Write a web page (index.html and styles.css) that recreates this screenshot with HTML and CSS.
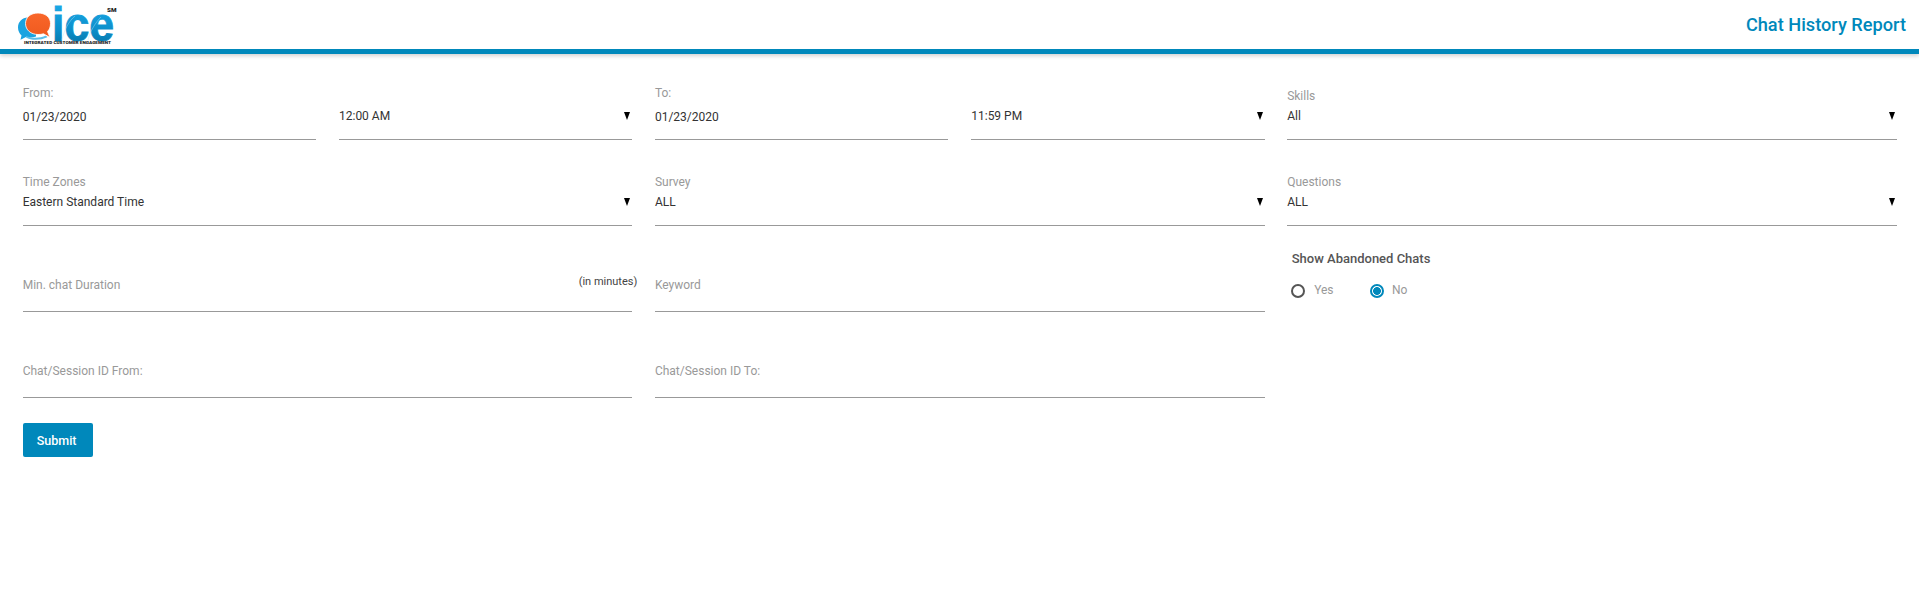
FILE: index.html
```html
<!DOCTYPE html>
<html lang="en">
<head>
<meta charset="utf-8">
<title>Chat History Report</title>
<link rel="stylesheet" href="styles.css">
</head>
<body>
<header class="topbar">
  <svg class="logo" viewBox="16 2 102 46" width="102" height="46" role="img" aria-label="ICE">
    <defs>
      <linearGradient id="iceFill" x1="0" y1="0" x2="0" y2="1">
        <stop offset="0" stop-color="#1fb0ee"/>
        <stop offset="0.6" stop-color="#0c8fcb"/>
        <stop offset="1" stop-color="#056f9f"/>
      </linearGradient>
      <linearGradient id="bubbleFill" x1="0" y1="0" x2="0" y2="1">
        <stop offset="0" stop-color="#f9662a"/>
        <stop offset="1" stop-color="#ef5a1f"/>
      </linearGradient>
    </defs>
    <path class="bubble-blue" d="M28 17.5C22 17.5 18 22 18 27.5C18 31 19.5 33.5 21.5 35.5L20.5 39.8L26 37C29 37.6 33 37.6 36 36.5L36 17.5Z"/>
    <path class="bubble-arc" d="M26 36C32 38.6 40 38.4 46 35.6L47.4 37.2C40 40.6 31 40.4 26 37.4Z"/>
    <path class="bubble-orange" d="M38 13C45 13 50.5 17 50.5 23.5C50.5 27 49.5 29.5 47.5 31.5L50 37.5L43.5 33.8C41.8 34.3 40 34.5 38 34.5C31 34.5 25.5 30 25.5 23.5C25.5 17 31 13 38 13Z"/>
    <text class="logo-word" x="52" y="40.6" textLength="62" lengthAdjust="spacingAndGlyphs">ice</text>
    <path class="logo-swoosh" d="M62 40C64 30 69 21 75 16M88 40C90 31 96 22 101 17"/>
    <text class="logo-sm" x="107" y="12.3" textLength="9.5" lengthAdjust="spacingAndGlyphs">SM</text>
    <text class="logo-tag" x="24" y="44.4" textLength="87" lengthAdjust="spacingAndGlyphs">INTEGRATED CUSTOMER ENGAGEMENT</text>
  </svg>
  <h1 class="title">Chat History Report</h1>
</header>

<main class="report">
  <form class="form-grid">
    <div class="pair">
      <div class="field date">
        <div class="label">From:</div>
        <div class="value">01/23/2020</div>
      </div>
      <div class="field select bare">
        <div class="value">12:00 AM</div>
        <span class="caret"></span>
      </div>
    </div>
    <div class="pair">
      <div class="field date">
        <div class="label">To:</div>
        <div class="value">01/23/2020</div>
      </div>
      <div class="field select bare">
        <div class="value">11:59 PM</div>
        <span class="caret"></span>
      </div>
    </div>
    <div class="field select">
      <div class="label">Skills</div>
      <div class="value">All</div>
      <span class="caret"></span>
    </div>

    <div class="field select">
      <div class="label">Time Zones</div>
      <div class="value">Eastern Standard Time</div>
      <span class="caret"></span>
    </div>
    <div class="field select">
      <div class="label">Survey</div>
      <div class="value">ALL</div>
      <span class="caret"></span>
    </div>
    <div class="field select">
      <div class="label">Questions</div>
      <div class="value">ALL</div>
      <span class="caret"></span>
    </div>

    <div class="field text">
      <div class="label">Min. chat Duration</div>
      <span class="hint">(in minutes)</span>
    </div>
    <div class="field text">
      <div class="label">Keyword</div>
    </div>
    <div class="choice">
      <div class="choice-title">Show Abandoned Chats</div>
      <div class="radios">
        <label class="radio"><span class="dot"></span><span class="radio-text">Yes</span></label>
        <label class="radio on"><span class="dot"></span><span class="radio-text">No</span></label>
      </div>
    </div>

    <div class="field text">
      <div class="label">Chat/Session ID From:</div>
    </div>
    <div class="field text">
      <div class="label">Chat/Session ID To:</div>
    </div>
  </form>
  <button class="submit" type="button">Submit</button>
</main>
</body>
</html>
```
FILE: styles.css
```css
* { box-sizing: border-box; }
html, body { margin: 0; padding: 0; background: #fff; }
body { font-family: Roboto, "Liberation Sans", sans-serif; font-size: 12px; color: #333; height: 595px; overflow: hidden; }

.topbar {
  height: 54px;
  border-bottom: 5px solid #0088bb;
  box-shadow: 0 2px 4px rgba(0, 0, 0, .18);
  display: flex;
  align-items: flex-start;
  justify-content: space-between;
  padding: 2px 13px 0 16px;
}
.logo { display: block; flex: none; overflow: visible; }
.bubble-blue { fill: #1ba3e0; }
.bubble-orange { fill: url(#bubbleFill); stroke: #fff; stroke-width: .8; }
.bubble-arc { fill: #5bbde8; }
.logo-word { font-family: "Liberation Sans", sans-serif; font-weight: 700; font-size: 48px; fill: url(#iceFill); stroke: url(#iceFill); stroke-width: .9; }
.logo-swoosh { fill: none; stroke: #bfe6f7; stroke-width: .5; opacity: .8; }
.logo-sm { font-family: Roboto, sans-serif; font-weight: 900; font-size: 5.5px; fill: #222; }
.logo-tag { font-family: Roboto, sans-serif; font-weight: 900; font-size: 4px; fill: #222; }

.title { margin: 13px 0 0 -2px; font-size: 18.2px; line-height: 20px; font-weight: 500; color: #0088bb; }

.report { padding: 0 22px 0 22.67px; }
.form-grid {
  display: grid;
  grid-template-columns: repeat(3, 609.67px);
  grid-auto-rows: 86px;
  column-gap: 22.6px;
}
.pair { display: grid; grid-template-columns: 293.33px 293.33px; column-gap: 23px; }

.field {
  position: relative;
  display: flex;
  flex-direction: column;
  justify-content: flex-end;
  border-bottom: 1px solid #999;
}
.label { font-size: 12px; line-height: 16px; color: #999; }
.value { font-size: 12px; line-height: 24px; padding-bottom: 11px; color: #333; }
.date .value { line-height: 26px; padding-bottom: 9px; }
.date .label { margin-bottom: 3px; }
.text .label { padding-bottom: 18px; }

.caret {
  position: absolute;
  right: 2px;
  top: 58px;
  width: 0;
  height: 0;
  border-left: 3.5px solid transparent;
  border-right: 3.5px solid transparent;
  border-top: 8px solid #000;
}
.hint {
  position: absolute;
  right: -5px;
  top: 48px;
  font-size: 11px;
  line-height: 16px;
  color: #444;
}

.choice { padding: 24px 0 0 4.5px; }
.choice-title { font-size: 13px; font-weight: 500; line-height: 18px; color: #555; }
.radios { display: flex; column-gap: 36.5px; margin: 15px 0 0 -.5px; }
.radio { display: flex; align-items: center; column-gap: 9px; }
.radio.on { column-gap: 8px; }
.radio-text { font-size: 12px; line-height: 16px; color: #999; position: relative; top: -1px; }
.dot {
  width: 14px;
  height: 14px;
  border: 2px solid #555;
  border-radius: 50%;
  background: #fff;
}
.on .dot {
  border-color: #0088bb;
  background: radial-gradient(circle, #0088bb 0 3.6px, #fff 4.2px);
}

.submit {
  display: block;
  margin-top: 25px;
  width: 70px;
  height: 34px;
  border: 0;
  border-radius: 2px;
  background: #0088bb;
  color: #fff;
  font: 500 12.5px Roboto, sans-serif;
  padding: 0 2px 0 0;
}
```
